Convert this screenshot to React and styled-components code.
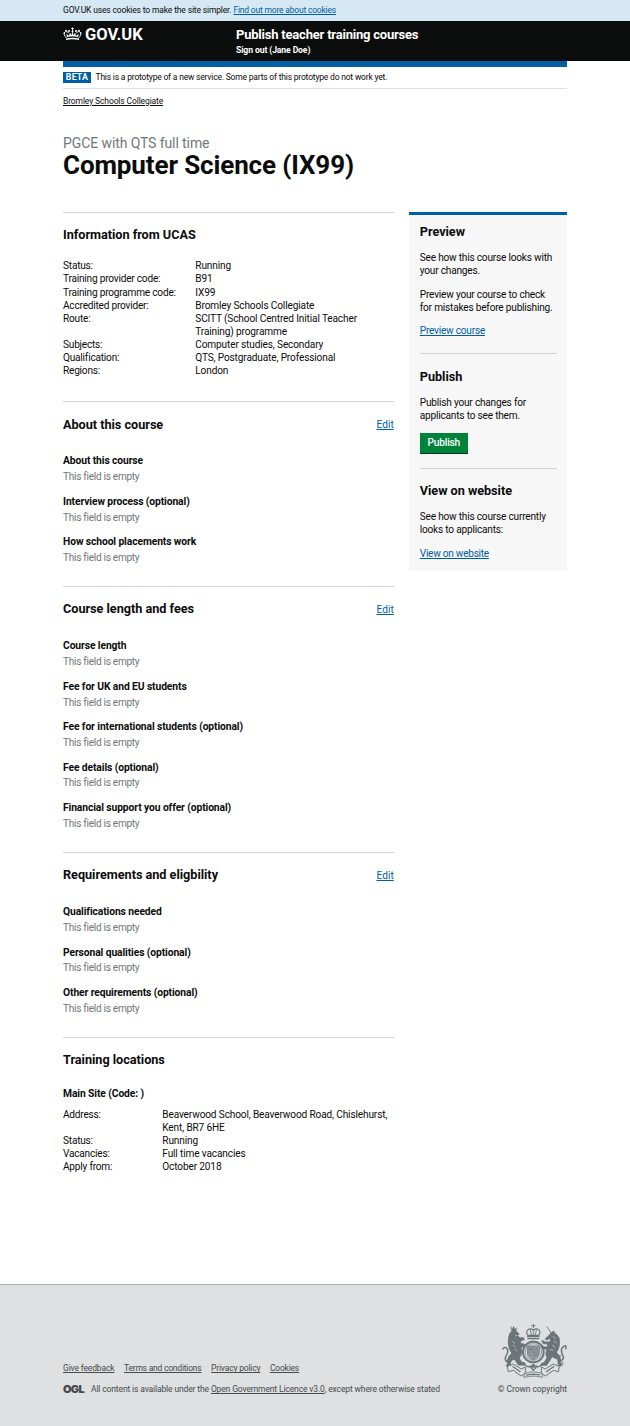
import React from "react";
import styled, { createGlobalStyle } from "styled-components";

const GlobalStyle = createGlobalStyle`
  body {
    margin: 0;
    background: #fff;
    color: #0b0c0c;
    font-family: Roboto, "Liberation Sans", sans-serif;
    font-size: 10.1px;
    font-weight: 450;
    line-height: 13.125px;
  }
  *, *::before, *::after { box-sizing: border-box; }
  h1, h2, h3, p, dl, dt, dd, ul { margin: 0; padding: 0; }
`;

const Container = styled.div`
  width: 504px;
  margin: 0 auto;
`;

const Link = styled.a`
  color: #005ea5;
  text-decoration: underline;
  text-decoration-thickness: 1px;
  text-underline-offset: 1px;
  letter-spacing: ${(p) => p.$track ?? -0.15}px;
`;

const Text = styled.span`
  letter-spacing: ${(p) => p.$track || 0}px;
`;

const CookieBar = styled.div`
  height: 21px;
  background: #d5e8f3;
  font-size: 8.5px;
  line-height: 20px;
  white-space: nowrap;
`;

const Header = styled.header`
  height: 40px;
  background: #0b0c0c;
  color: #fff;
`;

const HeaderInner = styled(Container)`
  display: flex;
`;

const Logo = styled.div`
  display: flex;
  width: 173px;
  padding-top: 6px;
  font-size: 16.5px;
  font-weight: 700;
  line-height: 16px;

  svg {
    width: 19px;
    height: 14px;
    margin-right: 3px;
  }
`;

const ServiceName = styled.div`
  padding-top: 6px;
  font-size: 13px;
  font-weight: 700;
  line-height: 16px;
  letter-spacing: -0.21px;
`;

const SignOut = styled.div`
  font-size: 8.6px;
  font-weight: 700;
  line-height: 15px;
  letter-spacing: -0.1px;
`;

const BlueBar = styled.div`
  height: 5.5px;
  background: #005ea5;
`;

const Phase = styled.div`
  display: flex;
  align-items: center;
  height: 22.5px;
  border-bottom: 1px solid #dee0e2;
  font-size: 8.5px;
`;

const BetaTag = styled.strong`
  width: 28px;
  height: 11px;
  margin-right: 4.5px;
  background: #005ea5;
  color: #fff;
  font-size: 8.8px;
  line-height: 11.5px;
  text-align: center;
  letter-spacing: 0.2px;
`;

const Breadcrumb = styled.nav`
  padding-top: 5.5px;
  font-size: 8.5px;

  a { color: #0b0c0c; }
`;

const Caption = styled.p`
  margin-top: 26px;
  color: #6f777b;
  font-size: 14px;
  font-weight: 400;
  line-height: 18px;
  letter-spacing: -0.09px;
`;

const Title = styled.h1`
  margin-top: -0.9px;
  font-size: 26px;
  line-height: 28px;
  font-weight: 700;
  letter-spacing: -0.12px;
`;

const Columns = styled.div`
  display: flex;
  justify-content: space-between;
  align-items: flex-start;
  margin-top: 33.1px;
`;

const Main = styled.main`
  width: 330.75px;
`;

const Section = styled.section`
  padding: 14.1px 0 ${(p) => p.$bottom ?? 10.8}px;
  border-top: 1px solid #d3d6d8;
`;

const SectionHead = styled.div`
  display: flex;
  justify-content: space-between;
  align-items: center;
  height: 16.4px;
  margin-bottom: ${(p) => p.$gap ?? 21.5}px;
`;

const SectionTitle = styled.h2`
  font-size: 12.7px;
  line-height: 16.4px;
  font-weight: 700;
  letter-spacing: -0.03px;
`;

const Field = styled.div`
  height: 40.4px;
`;

const FieldTitle = styled.h3`
  font-size: 10.3px;
  font-weight: 700;
  margin-bottom: ${(p) => p.$gap ?? 2.8}px;
  letter-spacing: -0.1px;
`;

const Empty = styled.p`
  color: #6f777b;
  letter-spacing: -0.29px;
`;

const Details = styled.dl`
  display: grid;
  grid-template-columns: ${(p) => p.$label}px 1fr;
  white-space: nowrap;
  letter-spacing: -0.14px;

  dt { letter-spacing: -0.21px; }
`;

const Sidebar = styled.aside`
  width: 157.75px;
  height: 359.5px;
  padding: 9.4px 10.5px 0;
  border-top: 3px solid #005ea5;
  background: #f7f7f7;
  white-space: nowrap;
  letter-spacing: -0.2px;
`;

const Panel = styled.section`
  & + & {
    padding-top: 14.5px;
    border-top: 1px solid #d0d3d5;
  }
  p { margin-top: 10.4px; }
`;

const PanelEnd = styled.div`
  margin-top: ${(p) => p.$top ?? 10.4}px;
  padding-bottom: ${(p) => p.$bottom}px;
`;

const PublishButton = styled.button`
  display: block;
  width: 48px;
  height: 21px;
  padding: 0;
  border: 0;
  border-radius: 0;
  background: #00823b;
  box-shadow: inset 0 -1px 0 #003618;
  color: #fff;
  font: 500 10.2px/20px Roboto, sans-serif;
  letter-spacing: -0.2px;
`;

const Footer = styled.footer`
  height: 142px;
  margin-top: 110.9px;
  border-top: 1px solid #a1acb2;
  background: #dee0e2;
  color: #454a4d;
  font-size: 8.5px;

  a { color: #454a4d; }
`;

const FooterInner = styled(Container)`
  display: flex;
  justify-content: space-between;
  align-items: flex-end;
  height: 111.4px;
  white-space: nowrap;
`;

const FooterLinks = styled.div`
  display: flex;
  gap: 9.6px;
  margin-bottom: 8px;
`;

const Licence = styled.div`
  display: flex;
  align-items: center;
`;

const Ogl = styled.span`
  width: 28px;
  font-family: Inter, sans-serif;
  font-weight: 900;
  font-size: 11px;
  letter-spacing: -0.7px;
`;

const Copyright = styled.div`
  display: flex;
  flex-direction: column;
  align-items: flex-end;

  svg {
    width: 66px;
    height: 54px;
    margin-bottom: 5px;
  }
`;

const Crown = () => (
  <svg viewBox="0 0 38 28" fill="#fff" stroke="#fff">
    <path d="M6 26c8-2 18-2 26 0v-3c-8-2-18-2-26 0z" stroke="none" />
    <path d="M7 22C3 18 1 14 3 11c2-3 7-2 9 2M31 22c4-4 6-8 4-11-2-3-7-2-9 2" fill="none" strokeWidth="1.8" />
    <path d="M8 20l-1-6 5 4 2-6 3 5 2-8 2 8 3-5 2 6 5-4-1 6c-7-2-15-2-22 0z" strokeWidth=".4" />
    <path d="M19 1v7M16.5 3h5" strokeWidth="2" />
    <circle cx="19" cy="9" r="2" stroke="none" />
    <circle cx="12" cy="8" r="2.1" stroke="none" />
    <circle cx="26" cy="8" r="2.1" stroke="none" />
    <circle cx="6" cy="7.5" r="1.9" stroke="none" />
    <circle cx="32" cy="7.5" r="1.9" stroke="none" />
    <circle cx="2.6" cy="12" r="1.7" stroke="none" />
    <circle cx="35.4" cy="12" r="1.7" stroke="none" />
  </svg>
);

const RoyalArms = () => (
  <svg viewBox="33 27 198 162" fill="none" stroke="#6b7579" strokeLinecap="round" strokeLinejoin="round">
    <path d="M130 28v10M125 32h10" strokeWidth="3" />
    <path d="M113 61c-8-14 4-24 17-16 13-8 25 2 17 16z" strokeWidth="3.5" />
    <path d="M130 45v15M121 45l3 14M139 45l-3 14" strokeWidth="2.6" />
    <path d="M113 65h34M114 71h32" strokeWidth="4" />
    <circle cx="130" cy="111" r="31" strokeWidth="6" strokeDasharray="5 1.2" />
    <circle cx="130" cy="111" r="25" strokeWidth="2" />
    <path d="M112 93h36v18c0 14-8 19-18 23-10-4-18-9-18-23z" strokeWidth="2.5" fill="#9ca4a8" />
    <path d="M130 94v38M113 111h34" strokeWidth="2" />
    <path d="M116 99h10M116 104h10M135 98l8 8M143 98l-8 8M117 116l8 7M134 117h10M135 123h7" strokeWidth="3" />
    <path d="M63 36l3 8 5-10 4 10 5-6-2 11H66z" fill="#6b7579" strokeWidth="1.5" />
    <path d="M66 50c9-4 18 0 21 8l-5 3 8 8 10-1 3 5-11 5-2 8 12 1 2 5-12 6c5 12 4 22-5 31l7 12 11 3v6H85l-12-18c-10 4-14 10-12 20l-8 4-4-4 4-6c-2-16 5-25 13-31-9-12-13-30-10-45 1-10 3-17 10-21z" fill="#6b7579" strokeWidth="3" />
    <path d="M68 80l6 5M69 91l7 5M74 103l7 5M76 62h4" stroke="#dee0e2" strokeWidth="1.8" />
    <path d="M62 139c-13 5-19-4-15-14 4-9 10-15 5-23-4-7-12-5-13 0" strokeWidth="4.5" />
    <path d="M171 35l13 20" strokeWidth="2.6" />
    <path d="M184 53l7-5 3 7c12 6 17 18 14 32 0 11-4 19-9 25 9 9 14 15 12 29l5 8-2 4-9-2-2-18-17-8-8 14-8 12h-17v-5l10-4 8-14c-5-9-4-16 0-25l-14-2-4-8 4-2 5 5 12-1-2-8-12-1-5-8 5-1 5 4h13l5-6-4-4-10 4-3-4 10-9z" fill="#6b7579" strokeWidth="2.4" />
    <path d="M190 64l6 7M193 78l6 6M188 92l7 5M181 103l8 4" stroke="#dee0e2" strokeWidth="1.8" />
    <path d="M206 137c13 1 17-8 12-17-5-10-6-20 3-26 6-4 9 1 6 7" strokeWidth="4.5" />
    <path d="M199 123c6-6 9 3 15-1M211 153c7-2 9-8 6-14" strokeWidth="2.4" strokeDasharray="3 2" />
    <path d="M53 154l17-7 24 15 12-6v19l-13 8-23-17-14 4z" strokeWidth="3" fill="#dee0e2" />
    <path d="M207 154l-17-7-24 15-12-6v19l13 8 23-17 14 4z" strokeWidth="3" fill="#dee0e2" />
    <path d="M69 155l21 15M191 155l-21 15" strokeWidth="4" strokeDasharray="3 3" />
    <path d="M103 176c17-7 37-7 54 0v11c-18-5-36-5-54 0z" strokeWidth="2.5" fill="#dee0e2" />
    <path d="M110 180c14-3 26-3 40 0" strokeWidth="4" strokeDasharray="3 3" />
    <path d="M106 151c8 7 16 6 24-3 8 9 16 10 24 3M119 153l11 13 11-13" strokeWidth="4" />
    <circle cx="130" cy="154" r="5" fill="#6b7579" stroke="none" />
  </svg>
);

const EMPTY = "This field is empty";

const SECTIONS = [
  {
    title: "About this course",
    fields: ["About this course", "Interview process (optional)", "How school placements work"],
  },
  {
    title: "Course length and fees",
    fields: [
      "Course length",
      "Fee for UK and EU students",
      "Fee for international students (optional)",
      "Fee details (optional)",
      "Financial support you offer (optional)",
    ],
  },
  {
    title: "Requirements and eligbility",
    fields: ["Qualifications needed", "Personal qualities (optional)", "Other requirements (optional)"],
  },
];

const UCAS = [
  ["Status:", "Running"],
  ["Training provider code:", "B91"],
  ["Training programme code:", "IX99"],
  ["Accredited provider:", "Bromley Schools Collegiate"],
  ["Route:", <>SCITT (School Centred Initial Teacher<br />Training) programme</>],
  ["Subjects:", "Computer studies, Secondary"],
  ["Qualification:", "QTS, Postgraduate, Professional"],
  ["Regions:", "London"],
];

const SITE = [
  ["Address:", <>Beaverwood School, Beaverwood Road, Chislehurst,<br />Kent, BR7 6HE</>],
  ["Status:", "Running"],
  ["Vacancies:", "Full time vacancies"],
  ["Apply from:", "October 2018"],
];

const DetailList = ({ rows, label }) => (
  <Details $label={label}>
    {rows.map(([name, value]) => (
      <React.Fragment key={name}>
        <dt>{name}</dt>
        <dd>{value}</dd>
      </React.Fragment>
    ))}
  </Details>
);

export default function App() {
  return (
    <>
      <GlobalStyle />
      <CookieBar>
        <Container>
          <Text $track={-0.15}>GOV.UK uses cookies to make the site simpler. </Text>
          <Link $track={-0.19}>Find out more about cookies</Link>
        </Container>
      </CookieBar>
      <Header>
        <HeaderInner>
          <Logo><Crown />GOV.UK</Logo>
          <div>
            <ServiceName>Publish teacher training courses</ServiceName>
            <SignOut>Sign out (Jane Doe)</SignOut>
          </div>
        </HeaderInner>
      </Header>
      <Container>
        <BlueBar />
        <Phase>
          <BetaTag>BETA</BetaTag>
          <Text $track={-0.19}>This is a prototype of a new service. Some parts of this prototype do not work yet.</Text>
        </Phase>
        <Breadcrumb><Link $track={-0.12}>Bromley Schools Collegiate</Link></Breadcrumb>
        <Caption>PGCE with QTS full time</Caption>
        <Title>Computer Science (IX99)</Title>
        <Columns>
          <Main>
            <Section $bottom={24}>
              <SectionHead $gap={16}><SectionTitle>Information from UCAS</SectionTitle></SectionHead>
              <DetailList rows={UCAS} label={132.3} />
            </Section>
            {SECTIONS.map((s) => (
              <Section key={s.title}>
                <SectionHead>
                  <SectionTitle>{s.title}</SectionTitle>
                  <Link $track={0.05}>Edit</Link>
                </SectionHead>
                {s.fields.map((f) => (
                  <Field key={f}>
                    <FieldTitle>{f}</FieldTitle>
                    <Empty>{EMPTY}</Empty>
                  </Field>
                ))}
              </Section>
            ))}
            <Section $bottom={0}>
              <SectionHead $gap={18}><SectionTitle>Training locations</SectionTitle></SectionHead>
              <FieldTitle $gap={8}>Main Site (Code: )</FieldTitle>
              <DetailList rows={SITE} label={99.3} />
            </Section>
          </Main>
          <Sidebar>
            <Panel>
              <SectionTitle>Preview</SectionTitle>
              <p>See how this course looks with<br />your changes.</p>
              <p>Preview your course to check<br />for mistakes before publishing.</p>
              <PanelEnd $bottom={16}><Link $track={-0.22}>Preview course</Link></PanelEnd>
            </Panel>
            <Panel>
              <SectionTitle>Publish</SectionTitle>
              <p>Publish your changes for<br />applicants to see them.</p>
              <PanelEnd $top={11} $bottom={14}><PublishButton>Publish</PublishButton></PanelEnd>
            </Panel>
            <Panel>
              <SectionTitle>View on website</SectionTitle>
              <p>See how this course currently<br />looks to applicants:</p>
              <PanelEnd $bottom={0}><Link $track={-0.26}>View on website</Link></PanelEnd>
            </Panel>
          </Sidebar>
        </Columns>
      </Container>
      <Footer>
        <FooterInner>
          <div>
            <FooterLinks>
              <Link>Give feedback</Link>
              <Link $track={-0.22}>Terms and conditions</Link>
              <Link $track={-0.18}>Privacy policy</Link>
              <Link $track={-0.2}>Cookies</Link>
            </FooterLinks>
            <Licence>
              <Ogl>OGL</Ogl>
              <Text $track={-0.13}>
                All content is available under the <Link $track={-0.13}>Open Government Licence v3.0</Link>, except where otherwise stated
              </Text>
            </Licence>
          </div>
          <Copyright><RoyalArms /><Text $track={-0.07}>© Crown copyright</Text></Copyright>
        </FooterInner>
      </Footer>
    </>
  );
}
